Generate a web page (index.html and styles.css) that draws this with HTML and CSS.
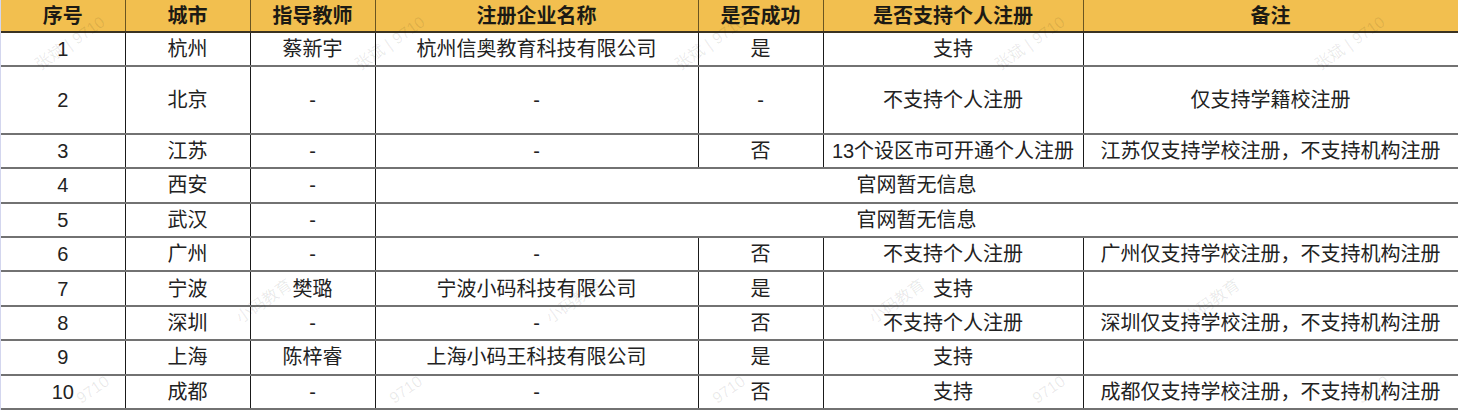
FILE: index.html
```html
<!DOCTYPE html>
<html lang="zh-CN">
<head>
<meta charset="utf-8">
<title>注册情况</title>
<link rel="stylesheet" href="styles.css">
</head>
<body>
<div class="sheet">
  <table class="grid">
    <colgroup>
      <col class="c-no"><col class="c-city"><col class="c-teacher"><col class="c-company"><col class="c-ok"><col class="c-personal"><col class="c-note">
    </colgroup>
    <thead>
      <tr><th>序号</th><th>城市</th><th>指导教师</th><th>注册企业名称</th><th>是否成功</th><th>是否支持个人注册</th><th>备注</th></tr>
    </thead>
    <tbody>
      <tr><td>1</td><td>杭州</td><td>蔡新宇</td><td>杭州信奥教育科技有限公司</td><td>是</td><td>支持</td><td></td></tr>
      <tr class="tall"><td>2</td><td>北京</td><td>-</td><td>-</td><td>-</td><td>不支持个人注册</td><td>仅支持学籍校注册</td></tr>
      <tr><td>3</td><td>江苏</td><td>-</td><td>-</td><td>否</td><td>13个设区市可开通个人注册</td><td>江苏仅支持学校注册，不支持机构注册</td></tr>
      <tr><td>4</td><td>西安</td><td>-</td><td colspan="4">官网暂无信息</td></tr>
      <tr><td>5</td><td>武汉</td><td>-</td><td colspan="4">官网暂无信息</td></tr>
      <tr><td>6</td><td>广州</td><td>-</td><td>-</td><td>否</td><td>不支持个人注册</td><td>广州仅支持学校注册，不支持机构注册</td></tr>
      <tr><td>7</td><td>宁波</td><td>樊璐</td><td>宁波小码科技有限公司</td><td>是</td><td>支持</td><td></td></tr>
      <tr><td>8</td><td>深圳</td><td>-</td><td>-</td><td>否</td><td>不支持个人注册</td><td>深圳仅支持学校注册，不支持机构注册</td></tr>
      <tr><td>9</td><td>上海</td><td>陈梓睿</td><td>上海小码王科技有限公司</td><td>是</td><td>支持</td><td></td></tr>
      <tr><td>10</td><td>成都</td><td>-</td><td>-</td><td>否</td><td>支持</td><td>成都仅支持学校注册，不支持机构注册</td></tr>
      <tr><td></td><td></td><td></td><td></td><td></td><td></td><td></td></tr>
    </tbody>
  </table>
  <div class="marks" aria-hidden="true">
    <span class="mark" style="left:68px;top:42px">张斌 | 9710</span>
    <span class="mark" style="left:388px;top:42px">张斌 | 9710</span>
    <span class="mark" style="left:708px;top:42px">张斌 | 9710</span>
    <span class="mark" style="left:1028px;top:42px">张斌 | 9710</span>
    <span class="mark" style="left:1348px;top:42px">张斌 | 9710</span>
    <span class="mark" style="left:262px;top:300px">小码教育</span>
    <span class="mark" style="left:572px;top:300px">小码教育</span>
    <span class="mark" style="left:895px;top:300px">小码教育</span>
    <span class="mark" style="left:1210px;top:300px">小码教育</span>
    <span class="mark" style="left:92px;top:390px">9710</span>
    <span class="mark" style="left:405px;top:390px">9710</span>
    <span class="mark" style="left:728px;top:390px">9710</span>
    <span class="mark" style="left:1048px;top:390px">9710</span>
    <span class="mark" style="left:1372px;top:390px">9710</span>
  </div>
</div>
</body>
</html>
```
FILE: styles.css
```css
html, body {
  margin: 0;
  padding: 0;
  background: #ffffff;
  overflow: hidden;
}

.sheet {
  position: relative;
  width: 1457px;
  height: 410px;
  border-left: 1px solid #d3d6ee;
  overflow: hidden;
}

.grid {
  width: 1457px;
  table-layout: fixed;
  border-collapse: collapse;
  font-family: "Liberation Sans", "Noto Sans CJK SC", sans-serif;
  font-size: 20px;
  color: #222222;
}

.c-no { width: 124px; }
.c-city { width: 125px; }
.c-teacher { width: 125px; }
.c-company { width: 323px; }
.c-ok { width: 125px; }
.c-personal { width: 260px; }
.c-note { width: 375px; }

.grid th {
  height: 31px;
  padding: 0;
  background: #f2bf4f;
  color: #1c1a14;
  font-weight: 700;
  text-align: center;
  vertical-align: middle;
  border-left: 1px solid #6b5520;
  border-right: 1px solid #6b5520;
  border-bottom: 2px solid #3a3222;
  line-height: 20px;
}

.grid th:first-child { border-left: none; }

.grid td {
  height: 32.4px;
  padding: 0;
  text-align: center;
  vertical-align: middle;
  border-left: 1px solid #1a1a1a;
  border-right: 1px solid #1a1a1a;
  border-bottom: 2px solid #727272;
  line-height: 20px;
  white-space: nowrap;
  overflow: hidden;
}

.grid td:first-child { border-left: none; }

.grid tr.tall td { height: 65.4px; }

.marks {
  position: absolute;
  inset: 0;
  pointer-events: none;
}

.mark {
  position: absolute;
  transform: translate(-50%, -50%) rotate(-35deg);
  font-family: "Liberation Sans", "Noto Sans CJK SC", sans-serif;
  font-size: 16px;
  color: rgba(0, 0, 0, 0.09);
  white-space: nowrap;
}
```
